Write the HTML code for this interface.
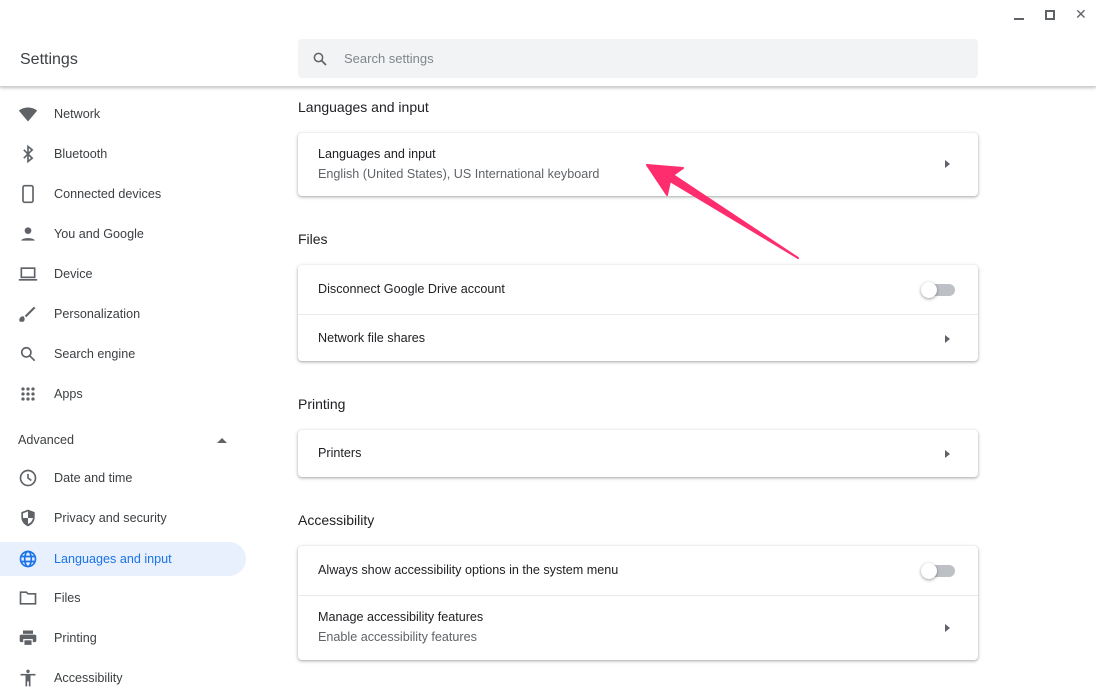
<!DOCTYPE html>
<html><head><style>
*{box-sizing:border-box;margin:0;padding:0}
body{width:1096px;height:693px;overflow:hidden;background:#fff;font-family:"Liberation Sans",sans-serif;color:#202124;position:relative}
.hdr{position:absolute;left:0;top:0;width:1096px;height:87px;background:#fff;border-bottom:1px solid #d0d0d0;box-shadow:0 1px 3px rgba(0,0,0,.25)}
.title{position:absolute;left:20px;top:51px;font-size:16px;color:#3c4043}
.search{position:absolute;left:298px;top:39px;width:680px;height:39px;background:#f1f3f4;border-radius:4px}
.search span{position:absolute;left:46px;top:12px;font-size:13px;color:#80868b}
.nav{position:absolute;left:0;font-size:12.6px;color:#3c4043;height:34px;width:246px}
.nav span{position:absolute;left:54px;top:10px}
.nav svg{position:absolute;left:18px;top:7px}
.sel{background:#e8f0fe;border-radius:0 17px 17px 0;color:#1a73e8}
.h{position:absolute;left:298px;font-size:14px;color:#202124}
.card{position:absolute;left:298px;width:680px;background:#fff;border-radius:4px;box-shadow:0 1px 2px rgba(60,64,67,.3),0 1px 3px 1px rgba(60,64,67,.15)}
.row{position:relative;border-top:1px solid #e8eaed;font-size:12.6px}
.row:first-child{border-top:none}
.row .t{position:absolute;left:20px}
.row .s{position:absolute;left:20px;color:#5f6368}
.tri{position:absolute;right:28px;width:0;height:0;border-left:5px solid #5f6368;border-top:4px solid transparent;border-bottom:4px solid transparent}
.tog{position:absolute;right:23px;width:32px;height:12px;border-radius:6px;background:#bdc1c6}
.tog:before{content:"";position:absolute;left:-2px;top:-2px;width:16px;height:16px;border-radius:50%;background:#fff;box-shadow:0 1px 3px rgba(0,0,0,.4)}
</style></head><body>
<div class="hdr">
<div class="title">Settings</div>
<div class="search"><svg style="position:absolute;left:13px;top:11px" width="18" height="18" viewBox="0 0 24 24"><circle cx="10" cy="10" r="5.5" stroke="#5f6368" stroke-width="2" fill="none"/><path d="M14 14l6 6" stroke="#5f6368" stroke-width="2.2"/></svg><span>Search settings</span></div>
<div style="position:absolute;left:1014px;top:18px;width:10px;height:2px;background:#5f6368"></div>
<div style="position:absolute;left:1045px;top:10px;width:10px;height:10px;border:2px solid #5f6368"></div>
<div style="position:absolute;left:1075px;top:6px;font-size:14px;color:#5f6368">✕</div>
</div>

<div class="nav" style="top:97px"><svg width="20" height="20" viewBox="0 0 24 24"><path d="M1 8c6-5 16-5 22 0L12 21z" fill="#5f6368"/></svg><span>Network</span></div>
<div class="nav" style="top:137px"><svg width="20" height="20" viewBox="0 0 24 24"><path d="M7 7l10 10-5 4V3l5 4L7 17" stroke="#5f6368" stroke-width="2" fill="none"/></svg><span>Bluetooth</span></div>
<div class="nav" style="top:177px"><svg width="20" height="20" viewBox="0 0 24 24"><rect x="6" y="2" width="12" height="20" rx="2" stroke="#5f6368" stroke-width="2" fill="none"/></svg><span>Connected devices</span></div>
<div class="nav" style="top:217px"><svg width="20" height="20" viewBox="0 0 24 24"><circle cx="12" cy="8" r="4" fill="#5f6368"/><path d="M4 20c0-4 16-4 16 0z" fill="#5f6368"/></svg><span>You and Google</span></div>
<div class="nav" style="top:257px"><svg width="20" height="20" viewBox="0 0 24 24"><rect x="4" y="5" width="16" height="11" stroke="#5f6368" stroke-width="2" fill="none"/><rect x="1" y="18" width="22" height="2" fill="#5f6368"/></svg><span>Device</span></div>
<div class="nav" style="top:297px"><svg width="20" height="20" viewBox="0 0 24 24"><path d="M20 4L9 15M6 16a3 3 0 0 0-3 4h3a3 3 0 0 0 0-4z" stroke="#5f6368" stroke-width="2.5" fill="#5f6368"/></svg><span>Personalization</span></div>
<div class="nav" style="top:337px"><svg width="20" height="20" viewBox="0 0 24 24"><circle cx="10" cy="10" r="5.5" stroke="#5f6368" stroke-width="2" fill="none"/><path d="M14 14l6 6" stroke="#5f6368" stroke-width="2"/></svg><span>Search engine</span></div>
<div class="nav" style="top:377px"><svg width="20" height="20" viewBox="0 0 24 24" fill="#5f6368"><circle cx="6" cy="6" r="2"/><circle cx="12" cy="6" r="2"/><circle cx="18" cy="6" r="2"/><circle cx="6" cy="12" r="2"/><circle cx="12" cy="12" r="2"/><circle cx="18" cy="12" r="2"/><circle cx="6" cy="18" r="2"/><circle cx="12" cy="18" r="2"/><circle cx="18" cy="18" r="2"/></svg><span>Apps</span></div>
<div style="position:absolute;left:18px;top:433px;font-size:12.6px;color:#3c4043">Advanced</div>
<div style="position:absolute;left:217px;top:438px;border-bottom:5px solid #5f6368;border-left:5px solid transparent;border-right:5px solid transparent"></div>
<div class="nav" style="top:461px"><svg width="20" height="20" viewBox="0 0 24 24"><circle cx="12" cy="12" r="9" stroke="#5f6368" stroke-width="2" fill="none"/><path d="M12 7v5l4 3" stroke="#5f6368" stroke-width="2" fill="none"/></svg><span>Date and time</span></div>
<div class="nav" style="top:501px"><svg width="20" height="20" viewBox="0 0 24 24"><path d="M12 2l8 3v6c0 5-3 9-8 11-5-2-8-6-8-11V5z" fill="#5f6368"/><path d="M12 12h6c-1 4-3 6-6 7zM12 12H6V6.5L12 4z" fill="#fff"/></svg><span>Privacy and security</span></div>
<div class="nav sel" style="top:542px"><svg width="20" height="20" viewBox="0 0 24 24"><circle cx="12" cy="12" r="9" stroke="#1a73e8" stroke-width="2" fill="none"/><ellipse cx="12" cy="12" rx="4" ry="9" stroke="#1a73e8" stroke-width="2" fill="none"/><path d="M3 9h18M3 15h18" stroke="#1a73e8" stroke-width="2"/></svg><span>Languages and input</span></div>
<div class="nav" style="top:581px"><svg width="20" height="20" viewBox="0 0 24 24"><path d="M3 5h7l2 2h9v12H3z" stroke="#5f6368" stroke-width="2" fill="none"/></svg><span>Files</span></div>
<div class="nav" style="top:621px"><svg width="20" height="20" viewBox="0 0 24 24" fill="#5f6368"><rect x="6" y="3" width="12" height="4"/><rect x="2" y="8" width="20" height="9" rx="2"/><rect x="7" y="14" width="10" height="7" fill="#5f6368" stroke="#fff" stroke-width="1.5"/></svg><span>Printing</span></div>
<div class="nav" style="top:661px"><svg width="20" height="20" viewBox="0 0 24 24" fill="#5f6368"><circle cx="12" cy="4" r="2"/><path d="M3 7h18v2h-6v13h-2v-6h-2v6H9V9H3z"/></svg><span>Accessibility</span></div>

<div class="h" style="top:99px">Languages and input</div>
<div class="card" style="top:133px;height:63px"><div class="row" style="height:63px"><div class="t" style="top:14px">Languages and input</div><div class="s" style="top:34px">English (United States), US International keyboard</div><div class="tri" style="top:27px"></div></div></div>

<div class="h" style="top:231px">Files</div>
<div class="card" style="top:265px;height:96px"><div class="row" style="height:49px"><div class="t" style="top:17px">Disconnect Google Drive account</div><div class="tog" style="top:19px"></div></div><div class="row" style="height:47px"><div class="t" style="top:16px">Network file shares</div><div class="tri" style="top:20px"></div></div></div>

<div class="h" style="top:396px">Printing</div>
<div class="card" style="top:430px;height:47px"><div class="row" style="height:47px"><div class="t" style="top:16px">Printers</div><div class="tri" style="top:20px"></div></div></div>

<div class="h" style="top:512px">Accessibility</div>
<div class="card" style="top:546px;height:114px"><div class="row" style="height:49px"><div class="t" style="top:17px">Always show accessibility options in the system menu</div><div class="tog" style="top:19px"></div></div><div class="row" style="height:65px"><div class="t" style="top:14px">Manage accessibility features</div><div class="s" style="top:34px">Enable accessibility features</div><div class="tri" style="top:28px"></div></div></div>

<svg style="position:absolute;left:0;top:0" width="1096" height="693"><path d="M798 258L670 181 667 195 647 165 683 168 673 175Z" fill="#fe2d6e" stroke="#fe2d6e" stroke-width="2" stroke-linejoin="round"/></svg>
</body></html>
